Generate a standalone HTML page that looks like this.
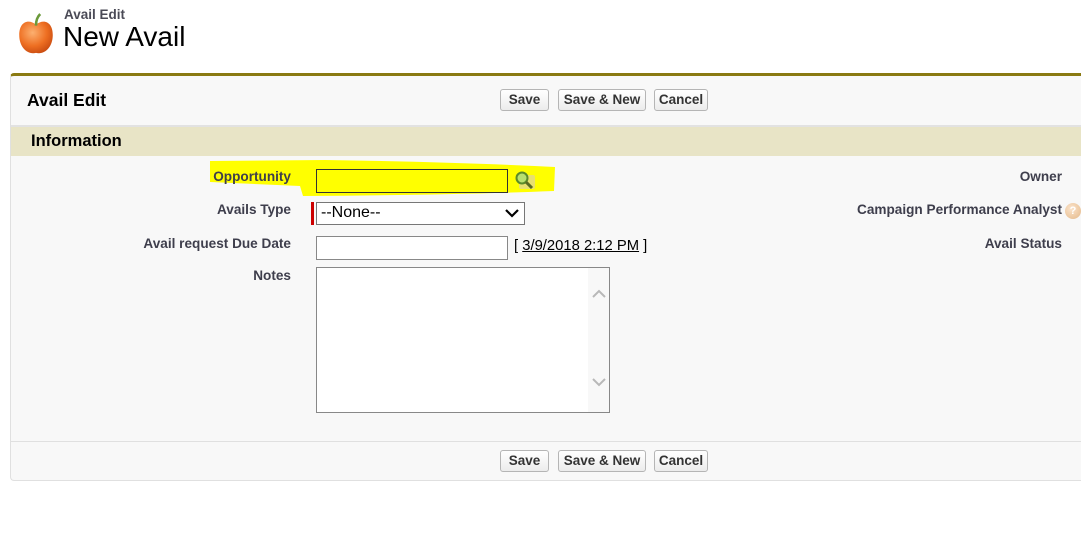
<!DOCTYPE html>
<html><head><style>
*{margin:0;padding:0;box-sizing:border-box}
body{width:1081px;height:545px;background:#fff;font-family:"Liberation Sans",Arial,sans-serif;position:relative;overflow:hidden}
.a{position:absolute}
.lbl{position:absolute;font-size:13.6px;font-weight:bold;color:#3e3e4c;text-align:right;white-space:nowrap}
.btn{position:absolute;height:22px;border:1px solid #b5b5b5;border-radius:3px;background:linear-gradient(#fff,#ececec);font-size:13.5px;font-weight:bold;color:#333;text-align:center;line-height:20px;white-space:nowrap}
</style></head><body>
<svg class="a" style="left:17px;top:12px" width="38" height="44" viewBox="0 0 36 42">
<defs><radialGradient id="g" cx="40%" cy="35%" r="70%"><stop offset="0" stop-color="#fcb070"/><stop offset="0.6" stop-color="#ee6f22"/><stop offset="1" stop-color="#c94b10"/></radialGradient></defs>
<path d="M18 12 C10 6 2 10 2 22 C2 34 10 41 18 39 C26 41 34 34 34 22 C34 10 26 6 18 12Z" fill="url(#g)"/>
<path d="M18 13 C18 8 19 5 22 2" stroke="#6a9a3a" stroke-width="2.5" fill="none"/>
</svg>
<div class="a" style="left:64px;top:7px;font-size:13.5px;font-weight:bold;color:#4a4a56">Avail Edit</div>
<div class="a" style="left:63px;top:21px;font-size:28px;color:#000">New Avail</div>
<div class="a" style="left:10px;top:73px;width:1090px;height:408px;background:#f8f8f8;border-top:3px solid #8a7a12;border-left:1px solid #e0e0e0;border-bottom:1px solid #e0e0e0;border-radius:4px"></div>
<div class="a" style="left:27px;top:90px;font-size:17.5px;font-weight:bold;color:#000">Avail Edit</div>
<div class="a" style="left:11px;top:125px;width:1070px;height:2px;background:#e2e2e2"></div>
<div class="a" style="left:11px;top:127px;width:1070px;height:29px;background:#e8e4c6"></div>
<div class="a" style="left:31px;top:132px;font-size:16.5px;font-weight:bold;color:#000">Information</div>
<div class="a" style="left:11px;top:441px;width:1070px;height:1px;background:#e0e0e0"></div>
<div class="btn" style="left:500px;top:89px;width:49px">Save</div>
<div class="btn" style="left:558px;top:89px;width:88px">Save &amp; New</div>
<div class="btn" style="left:654px;top:89px;width:54px">Cancel</div>
<div class="btn" style="left:500px;top:450px;width:49px">Save</div>
<div class="btn" style="left:558px;top:450px;width:88px">Save &amp; New</div>
<div class="btn" style="left:654px;top:450px;width:54px">Cancel</div>
<svg class="a" style="left:205px;top:158px" width="355" height="40"><path d="M5 3 L120 2 Q250 4 350 9 L349 33 Q250 37 98 38 L95 28 L5 24Z" fill="#ffff00"/></svg>
<div class="lbl" style="right:790px;top:169px">Opportunity</div>
<div class="a" style="left:316px;top:169px;width:192px;height:24px;border:1px solid #333;background:#ffff00"></div>
<svg class="a" style="left:514px;top:170px" width="22" height="20"><rect x="5" y="5" width="16" height="14" fill="#e8e070" rx="2"/><circle cx="8" cy="8" r="5.5" fill="#b8e070" stroke="#5a8a2a" stroke-width="2"/><path d="M12 12 L18 18" stroke="#5a6a20" stroke-width="3"/></svg>
<div class="lbl" style="right:790px;top:202px">Avails Type</div>
<div class="a" style="left:311px;top:202px;width:3px;height:23px;background:#c00"></div>
<div class="a" style="left:316px;top:202px;width:209px;height:23px;border:1px solid #777;background:#fff;font-size:16px;color:#000;padding:1px 0 0 4px">--None--</div>
<svg class="a" style="left:504px;top:207px" width="16" height="12"><path d="M2 3 L8 9 L14 3" stroke="#000" stroke-width="2.2" fill="none"/></svg>
<div class="lbl" style="right:790px;top:236px">Avail request Due Date</div>
<div class="a" style="left:316px;top:236px;width:192px;height:24px;border:1px solid #888;background:#fff"></div>
<div class="a" style="left:514px;top:238px;font-size:14.8px;color:#000">[ <u>3/9/2018 2:12 PM</u> ]</div>
<div class="lbl" style="right:790px;top:268px">Notes</div>
<div class="a" style="left:316px;top:267px;width:294px;height:146px;border:1px solid #888;background:#fff"></div>
<div class="a" style="left:588px;top:268px;width:21px;height:144px;background:#f8f8f8"></div>
<svg class="a" style="left:590px;top:285px" width="18" height="110"><path d="M3 12 L9 6 L15 12" stroke="#b8b8b8" stroke-width="2" fill="none"/><path d="M3 94 L9 100 L15 94" stroke="#b8b8b8" stroke-width="2" fill="none"/></svg>
<div class="lbl" style="right:19px;top:169px">Owner</div>
<div class="lbl" style="right:19px;top:202px">Campaign Performance Analyst</div>
<div class="a" style="left:1065px;top:203px;width:16px;height:16px;border-radius:50%;background:radial-gradient(circle at 40% 35%,#fbe4cc,#e4b888);color:#fff;font-size:11px;font-weight:bold;text-align:center;line-height:16px">?</div>
<div class="lbl" style="right:19px;top:236px">Avail Status</div>
</body></html>
